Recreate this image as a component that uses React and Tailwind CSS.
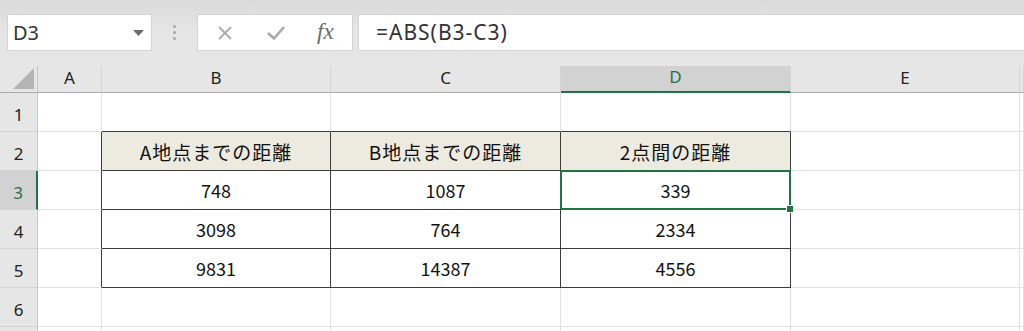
const cols = ["A", "B", "C", "D", "E", ""];

const tableRows = [
  ["A地点までの距離", "B地点までの距離", "2点間の距離"],
  ["748", "1087", "339"],
  ["3098", "764", "2334"],
  ["9831", "14387", "4556"],
];

const jp = "font-['Noto_Sans_CJK_JP','Noto_Sans',sans-serif]";

function CornerCell() {
  return (
    <div className="relative bg-[#e6e6e6] border-r border-b border-r-[#c6c6c6] border-b-[#ababab]">
      <svg className="absolute right-[3px] bottom-[3px]" width="21" height="21" viewBox="0 0 21 21">
        <polygon points="21,0 21,21 0,21" fill="#b4b4b4" />
      </svg>
    </div>
  );
}

function ColHeader({ label }) {
  const selected = label === "D";
  return (
    <div
      className={
        "flex items-end justify-center pb-[2px] text-[17px] font-['Noto_Sans',sans-serif] border-r border-r-[#d4d4d4] " +
        (selected
          ? "bg-[#d2d2d2] text-[#217346] border-b-2 border-b-[#217346]"
          : "bg-[#e6e6e6] text-[#222] border-b border-b-[#ababab]")
      }
    >
      {label}
    </div>
  );
}

function RowHeader({ n, label }) {
  const selected = n === 3;
  return (
    <div
      className={
        "flex items-end justify-center pb-[4px] text-[17px] font-['Noto_Sans',sans-serif] border-b border-b-[#d4d4d4] " +
        (selected
          ? "bg-[#d2d2d2] text-[#217346] border-r-2 border-r-[#217346]"
          : "bg-[#e6e6e6] text-[#222] border-r border-r-[#c6c6c6]")
      }
    >
      {label}
    </div>
  );
}

function Cell({ row, col }) {
  // col index: 0 = A, 1 = B ... ; row 1-based
  const inTable = row >= 2 && row <= 5 && col >= 1 && col <= 3;
  const leftOfTable = row >= 2 && row <= 5 && col === 0;
  const aboveTable = row === 1 && col >= 1 && col <= 3;
  const text = inTable ? tableRows[row - 2][col - 1] : "";
  const head = inTable && row === 2;
  const selected = row === 3 && col === 3;

  const rightDark = inTable || leftOfTable;
  const bottomDark = inTable || aboveTable;

  return (
    <div
      className={
        "relative flex items-end justify-center border-r border-b text-[#111] " +
        jp +
        " " +
        (head ? "text-[19px] tracking-[1px] pb-[4px] " : "text-[18px] pb-[5px] ") +
        (selected ? "z-10 " : "") +
        (rightDark ? "border-r-[#3c3c3c] " : "border-r-[#e1e1e1] ") +
        (bottomDark ? "border-b-[#3c3c3c] " : "border-b-[#e1e1e1] ") +
        (head ? "bg-[#edebe0]" : "bg-white")
      }
    >
      {text}
      {selected && (
        <div className="absolute -left-px -top-px -right-px -bottom-px border-2 border-[#217346]">
          <div className="absolute -right-[5px] -bottom-[5px] w-[8px] h-[8px] bg-[#217346] border border-white" />
        </div>
      )}
    </div>
  );
}

export default function App() {
  const rows = [1, 2, 3, 4, 5, 6, 7];
  return (
    <div className="w-[1024px] h-[331px] overflow-hidden bg-[#e6e6e6] flex flex-col">
      {/* formula bar */}
      <div className="h-[66px] shrink-0 flex items-start pt-[14px] bg-gradient-to-b from-[#dadada] via-[#e6e6e6] to-[#e6e6e6]">
        <div className="ml-[7px] w-[145px] h-[37px] bg-white border border-[#d4d4d4] flex items-center justify-between pl-[5px] pr-[7px]">
          <span className="text-[20px] text-[#333] font-['Noto_Sans',sans-serif]">D3</span>
          <svg width="11" height="6" viewBox="0 0 11 6">
            <polygon points="0,0 11,0 5.5,6" fill="#6b6b6b" />
          </svg>
        </div>
        <div className="w-[45px] h-[37px] flex flex-col items-center justify-center gap-[3px]">
          <span className="w-[3px] h-[3px] rounded-full bg-[#a6a6a6]" />
          <span className="w-[3px] h-[3px] rounded-full bg-[#a6a6a6]" />
          <span className="w-[3px] h-[3px] rounded-full bg-[#a6a6a6]" />
        </div>
        <div className="w-[156px] h-[37px] bg-white border border-[#d4d4d4] flex items-center">
          <svg className="ml-[19px]" width="16" height="16" viewBox="0 0 16 16">
            <path d="M2 2 L14 14 M14 2 L2 14" stroke="#a9a9a9" strokeWidth="1.8" />
          </svg>
          <svg className="ml-[33px]" width="20" height="16" viewBox="0 0 20 16">
            <path d="M2 8 L8 13.5 L18 2" stroke="#a9a9a9" strokeWidth="2.6" fill="none" />
          </svg>
          <span className="ml-[31px] text-[23px] italic text-[#6b6b6b] font-['Liberation_Serif',serif] leading-none pb-[3px]">
            fx
          </span>
        </div>
        <div className="ml-[5px] flex-1 h-[37px] bg-white border border-r-0 border-[#d4d4d4] flex items-center pl-[17px]">
          <span className="text-[21px] tracking-[1px] text-[#333] font-['Noto_Sans',sans-serif]">=ABS(B3-C3)</span>
        </div>
      </div>

      {/* sheet grid */}
      <div className="grid grid-cols-[38px_64px_229px_230px_230px_229px_1fr] grid-rows-[27px_repeat(7,39px)]">
        <CornerCell />
        {cols.map((c, i) => (
          <ColHeader key={i} label={c} />
        ))}
        {rows.map((r) => [
          <RowHeader key={"h" + r} n={r} label={r <= 6 ? r : ""} />,
          ...cols.map((_, ci) => <Cell key={r + "-" + ci} row={r} col={ci} />),
        ])}
      </div>
    </div>
  );
}
